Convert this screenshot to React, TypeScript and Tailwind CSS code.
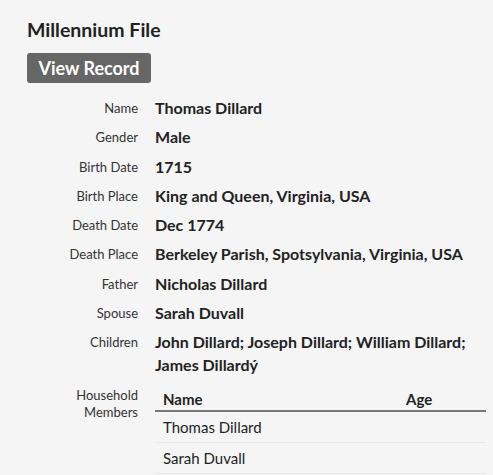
const rows: { label: string; value: string }[] = [
  { label: "Name", value: "Thomas Dillard" },
  { label: "Gender", value: "Male" },
  { label: "Birth Date", value: "1715" },
  { label: "Birth Place", value: "King and Queen, Virginia, USA" },
  { label: "Death Date", value: "Dec 1774" },
  { label: "Death Place", value: "Berkeley Parish, Spotsylvania, Virginia, USA" },
  { label: "Father", value: "Nicholas Dillard" },
  { label: "Spouse", value: "Sarah Duvall" },
  { label: "Children", value: "John Dillard; Joseph Dillard; William Dillard; James Dillardý" },
]

const members = [
  { name: "Thomas Dillard", age: "" },
  { name: "Sarah Duvall", age: "" },
]

export default function App() {
  return (
    <div className="min-h-[475px] bg-[#f5f5f5] pl-[27px] pr-2 pt-[18px] font-['Lato',sans-serif] text-[#222]">
      <h2 className="text-[19.5px] font-bold leading-6">Millennium File</h2>
      <button className="mt-[11px] h-[30px] w-[124px] rounded-[3px] bg-[#666] text-[18px] font-bold text-white">
        View Record
      </button>

      <dl className="mt-[13px] flex flex-col gap-[6.3px]">
        {rows.map((r) => (
          <div key={r.label} className="flex items-start gap-[17px]">
            <dt className="h-[23px] w-[111px] shrink-0 text-right text-[13px] leading-[25px] text-[#333]">{r.label}</dt>
            <dd className="w-[325px] text-[16px] font-bold leading-[23px]">{r.value}</dd>
          </div>
        ))}
        <div className="flex gap-[17px] pt-[4px]">
          <dt className="w-[111px] shrink-0 text-right text-[13px] leading-[17px] text-[#333]">
            Household
            <br />
            Members
          </dt>
          <dd className="flex-1">
            <table className="w-[331px] text-[15px]">
              <thead>
                <tr className="border-b-2 border-[#777]">
                  <th className="px-2 pb-[1px] pt-[2px] text-left font-bold leading-5">Name</th>
                  <th className="w-[80px] px-0 pb-[1px] pt-[2px] text-left font-bold leading-5">Age</th>
                </tr>
              </thead>
              <tbody>
                {members.map((m) => (
                  <tr key={m.name} className="border-b border-[#e8e8e8]">
                    <td className="px-2 py-[5px] leading-5">{m.name}</td>
                    <td className="py-[5px] leading-5">{m.age}</td>
                  </tr>
                ))}
              </tbody>
            </table>
          </dd>
        </div>
      </dl>
    </div>
  )
}
